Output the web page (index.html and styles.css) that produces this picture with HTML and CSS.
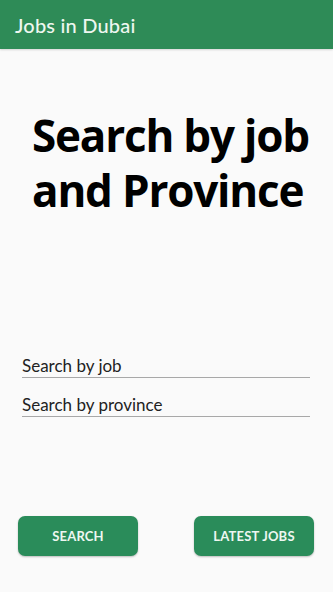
FILE: index.html
```html
<!DOCTYPE html>
<html>
<head>
<meta charset="utf-8">
<link rel="stylesheet" href="styles.css">
</head>
<body>
<div class="app">
  <header class="appbar">Jobs in Dubai</header>
  <main class="content">
    <h1 class="headline">Search by job<br>and Province</h1>
    <div class="fields">
      <div class="field">Search by job</div>
      <div class="field">Search by province</div>
    </div>
    <div class="actions">
      <button class="btn">SEARCH</button>
      <button class="btn">LATEST JOBS</button>
    </div>
  </main>
</div>
</body>
</html>
```
FILE: styles.css
```css
html, body {
  margin: 0;
  padding: 0;
  background: #fafafa;
}
.app {
  width: 333px;
  height: 592px;
  display: flex;
  flex-direction: column;
  background: #fafafa;
  font-family: Lato, "Open Sans", sans-serif;
}
.appbar {
  height: 49px;
  flex: none;
  background: #2e8b57;
  color: #eef7f0;
  font-size: 20px;
  font-weight: 500;
  letter-spacing: 0.2px;
  display: flex;
  align-items: center;
  padding-left: 15px;
  padding-top: 1px;
  box-sizing: border-box;
  box-shadow: 0 1px 2px rgba(0,0,0,0.15);
}
.content {
  flex: 1;
  display: flex;
  flex-direction: column;
}
.headline {
  margin: 59px 0 0 32px;
  font-family: "Open Sans", sans-serif;
  font-weight: 700;
  font-size: 44px;
  line-height: 55px;
  letter-spacing: -1.2px;
  color: #000;
}
.fields {
  margin: 138px 23px 0 22px;
  display: flex;
  flex-direction: column;
  gap: 17px;
}
.field {
  font-size: 17px;
  color: #222;
  line-height: 20px;
  padding-bottom: 1px;
  border-bottom: 1.5px solid #a8a8a8;
}
.actions {
  margin: 99px 19px 0 18px;
  display: flex;
  justify-content: space-between;
}
.btn {
  width: 120px;
  height: 40px;
  border: none;
  border-radius: 7px;
  background: #2a8c5a;
  color: #eef7f1;
  font-family: Lato, sans-serif;
  font-weight: 700;
  font-size: 13px;
  letter-spacing: 0.2px;
  box-shadow: 0 1px 2px rgba(0,0,0,0.25);
  padding: 0;
}
```
